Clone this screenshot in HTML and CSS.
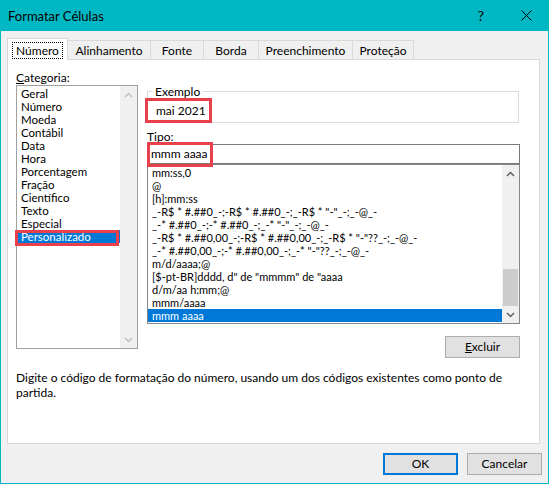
FILE: index.html
```html
<!DOCTYPE html>
<html lang="pt-BR">
<head>
<meta charset="utf-8">
<title>Formatar Células</title>
<link rel="stylesheet" href="styles.css">
</head>
<body>
<div class="dialog">
  <div class="titlebar">
    <span class="title">Formatar Células</span>
    <span class="help">?</span>
    <span class="close"><svg width="11" height="11" viewBox="0 0 11 11"><path d="M0.5 0.5 L10.5 10.5 M10.5 0.5 L0.5 10.5" stroke="#000" stroke-width="1" fill="none"/></svg></span>
  </div>
  <div class="body">
    <div class="tabs">
      <div class="tab active w-num"><span class="focus">Número</span></div>
      <div class="tab w-ali">Alinhamento</div>
      <div class="tab w-fon">Fonte</div>
      <div class="tab w-bor">Borda</div>
      <div class="tab w-pre">Preenchimento</div>
      <div class="tab w-pro">Proteção</div>
    </div>
    <div class="panel">
      <div class="main">
        <div class="left">
          <div class="label"><u>C</u>ategoria:</div>
          <div class="listbox catlist">
            <div class="rows">
              <div class="row">Geral</div>
              <div class="row">Número</div>
              <div class="row">Moeda</div>
              <div class="row">Contábil</div>
              <div class="row">Data</div>
              <div class="row">Hora</div>
              <div class="row">Porcentagem</div>
              <div class="row">Fração</div>
              <div class="row">Científico</div>
              <div class="row">Texto</div>
              <div class="row">Especial</div>
              <div class="row selected">Personalizado</div>
            </div>
            <div class="scrollbar disabled">
              <div class="arrow"><svg width="9" height="6" viewBox="0 0 9 6"><path d="M1 5 L4.5 1.5 L8 5" fill="none" stroke="#c0c0c0" stroke-width="1.5"/></svg></div>
              <div class="track"></div>
              <div class="arrow"><svg width="9" height="6" viewBox="0 0 9 6"><path d="M1 1 L4.5 4.5 L8 1" fill="none" stroke="#c0c0c0" stroke-width="1.5"/></svg></div>
            </div>
          </div>
          <div class="mark mark-cat"></div>
        </div>
        <div class="right">
          <fieldset class="group">
            <legend>Exemplo</legend>
            <div class="sample">mai 2021</div>
          </fieldset>
          <div class="label tipo">Tip<u>o</u>:</div>
          <div class="input">mmm aaaa</div>
          <div class="listbox typelist">
            <div class="rows">
              <div class="row">mm:ss,0</div>
              <div class="row">@</div>
              <div class="row">[h]:mm:ss</div>
              <div class="row">_-R$ * #.##0_-;-R$ * #.##0_-;_-R$ * "-"_-;_-@_-</div>
              <div class="row">_-* #.##0_-;-* #.##0_-;_-* "-"_-;_-@_-</div>
              <div class="row">_-R$ * #.##0,00_-;-R$ * #.##0,00_-;_-R$ * "-"??_-;_-@_-</div>
              <div class="row">_-* #.##0,00_-;-* #.##0,00_-;_-* "-"??_-;_-@_-</div>
              <div class="row">m/d/aaaa;@</div>
              <div class="row">[$-pt-BR]dddd, d" de "mmmm" de "aaaa</div>
              <div class="row">d/m/aa h:mm;@</div>
              <div class="row">mmm/aaaa</div>
              <div class="row selected">mmm aaaa</div>
            </div>
            <div class="scrollbar">
              <div class="arrow"><svg width="9" height="6" viewBox="0 0 9 6"><path d="M1 5 L4.5 1.5 L8 5" fill="none" stroke="#606060" stroke-width="1.5"/></svg></div>
              <div class="track"><div class="thumb"></div></div>
              <div class="arrow"><svg width="9" height="6" viewBox="0 0 9 6"><path d="M1 1 L4.5 4.5 L8 1" fill="none" stroke="#606060" stroke-width="1.5"/></svg></div>
            </div>
          </div>
          <div class="actions"><button class="btn"><u>E</u>xcluir</button></div>
          <div class="mark mark-sample"></div>
          <div class="mark mark-input"></div>
        </div>
      </div>
      <p class="desc">Digite o código de formatação do número, usando um dos códigos existentes como ponto de<br>partida.</p>
    </div>
    <div class="footer">
      <button class="btn default">OK</button>
      <button class="btn">Cancelar</button>
    </div>
  </div>
</div>
</body>
</html>
```
FILE: styles.css
```css
* { box-sizing: border-box; }
html, body { margin: 0; padding: 0; }
body {
  width: 549px;
  height: 484px;
  overflow: hidden;
  background: #f0f0f0;
  font-family: Lato, "Noto Sans", sans-serif;
  font-size: 12px;
  color: #000;
}
.dialog {
  width: 549px;
  height: 484px;
  border: 1px solid #00b7c3;
  border-top: 0;
  display: flex;
  flex-direction: column;
  background: #f0f0f0;
}
.titlebar {
  height: 31px;
  flex: none;
  background: #00b7c3;
  display: flex;
  align-items: center;
  padding-left: 8px;
  margin: 0 -1px;
}
.title { flex: 1; font-size: 13px; padding-top: 1px; }
.help { width: 46px; text-align: center; font-size: 14px; }
.close { width: 45px; display: flex; justify-content: center; }
.close svg { display: block; }

.body { flex: 1; display: flex; flex-direction: column; }

.tabs {
  display: flex;
  align-items: flex-end;
  height: 22px;
  margin-top: 7px;
  padding-left: 6px;
  flex: none;
}
.tab {
  height: 20px;
  border: 1px solid #d9d9d9;
  border-left: 0;
  border-bottom: 0;
  background: #f0f0f0;
  text-align: center;
  padding-top: 2px;
  line-height: 15px;
  white-space: nowrap;
}
.tab.active {
  height: 22px;
  border-left: 1px solid #d9d9d9;
  background: #fff;
  position: relative;
  z-index: 1;
  padding-top: 3px;
}
.focus {
  display: inline-block;
  border: 1px dotted #000;
  padding: 0 3px;
  line-height: 15px;
}
.w-num { width: 61px; }
.w-ali { width: 83px; }
.w-fon { width: 53px; }
.w-bor { width: 55px; }
.w-pre { width: 94px; }
.w-pro { width: 61px; }

.panel {
  margin: -1px 8px 0 6px;
  height: 385px;
  flex: none;
  background: #fff;
  border: 1px solid #d9d9d9;
  padding: 10px 0 0 8px;
}
.main {
  display: flex;
  align-items: flex-start;
  gap: 9px;
}
.left { width: 122px; position: relative; }
.right { width: 373px; padding-top: 14px; position: relative; }
.label { line-height: 15px; height: 15px; }
.tipo { margin-top: 6px; }

.listbox {
  display: flex;
  border: 1px solid #828790;
  background: #fff;
}
.catlist { height: 264px; border-color: #a0a0a0; }
.typelist { height: 160px; }
.rows { flex: 1; padding: 1px 0; min-width: 0; overflow: hidden; }
.row {
  height: 13px;
  font-size: 11px;
  line-height: 13px;
  padding-left: 4px;
  white-space: nowrap;
}
.catlist .row { font-size: 11.5px; }
.row.selected { background: #0078d7; color: #fff; }

.scrollbar {
  width: 17px;
  flex: none;
  background: #f0f0f0;
  display: flex;
  flex-direction: column;
}
.arrow {
  height: 17px;
  flex: none;
  display: flex;
  align-items: center;
  justify-content: center;
}
.arrow svg { display: block; }
.track {
  flex: 1;
  display: flex;
  flex-direction: column;
  justify-content: flex-end;
  padding: 0 1px;
}
.thumb { height: 37px; background: #cdcdcd; }

.group {
  margin: 0 1px 0 0;
  padding: 4px 0;
  border: 1px solid #dcdcdc;
  min-width: 0;
}
.group legend {
  padding: 0 2px;
  margin-left: 5px;
  line-height: 15px;
}
.sample { line-height: 15px; padding-left: 8px; }

.input {
  height: 20px;
  border: 1px solid #7a7a7a;
  line-height: 18px;
  padding: 0 3px;
  background: #fff;
}

.actions { display: flex; justify-content: flex-end; margin-top: 12px; }

.btn {
  width: 75px;
  height: 22px;
  padding: 0;
  margin: 0;
  border: 1px solid #adadad;
  background: #e1e1e1;
  font: inherit;
  color: #000;
  line-height: 18px;
}
.btn.default { border: 2px solid #0078d7; }

.desc {
  margin: 12px 0 0 0;
  line-height: 15px;
}

.footer {
  display: flex;
  justify-content: flex-end;
  gap: 9px;
  padding: 9px 6px 0 0;
}

.mark {
  position: absolute;
  border: 3px solid #e9414b;
  pointer-events: none;
}
.mark-cat { left: -1px; top: 160px; width: 104px; height: 16px; }
.mark-sample { left: -2px; top: 28px; width: 67px; height: 25px; }
.mark-input { left: 0; top: 72px; width: 66px; height: 25px; }
```
